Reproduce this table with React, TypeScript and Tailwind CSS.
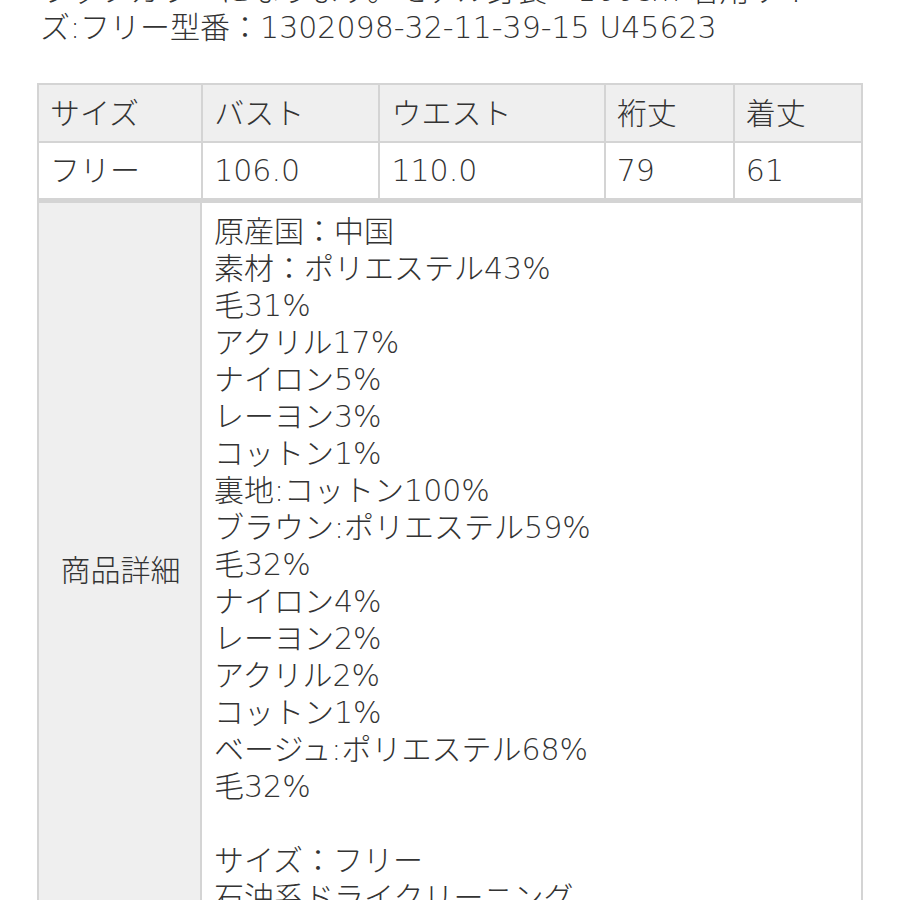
const header = ['サイズ', 'バスト', 'ウエスト', '裄丈', '着丈']
const values = ['フリー', '106.0', '110.0', '79', '61']
const widths = ['w-[164px]', 'w-[177px]', 'w-[225px]', 'w-[129px]', 'w-[128px]']

const details = [
  '原産国：中国',
  '素材：ポリエステル43%',
  '毛31%',
  'アクリル17%',
  'ナイロン5%',
  'レーヨン3%',
  'コットン1%',
  '裏地:コットン100%',
  'ブラウン:ポリエステル59%',
  '毛32%',
  'ナイロン4%',
  'レーヨン2%',
  'アクリル2%',
  'コットン1%',
  'ベージュ:ポリエステル68%',
  '毛32%',
  '',
  'サイズ：フリー',
  '石油系ドライクリーニング',
]

export default function App() {
  return (
    <div className="h-[900px] overflow-hidden bg-white text-[#333] font-[family-name:'DejaVu_Sans','Noto_Sans_CJK_JP',sans-serif] font-light text-[30px] leading-[37px]">
      <div className="-mt-[28px] px-[40px]">
        <p>ラップカラーになります。モデル身長：166cm 着用サイ</p>
        <p>ズ:フリー型番：1302098-32-11-39-15 U45623</p>
      </div>

      <div className="mt-[37px] ml-[37px] w-[826px]">
        <table className="table-fixed border-collapse w-full">
          <tbody>
            <tr className="bg-[#efefef] h-[58px]">
              {header.map((h, i) => (
                <td key={h} className={`${widths[i]} border-2 border-[#d4d4d4] px-[11px] pb-[0px] align-middle`}>{h}</td>
              ))}
            </tr>
            <tr className="h-[57px]">
              {values.map((v, i) => (
                <td key={i} className={`${widths[i]} border-2 border-[#d4d4d4] px-[11px] pb-[0px] align-middle`}>{v}</td>
              ))}
            </tr>
          </tbody>
        </table>

        <div className="flex border-2 border-[#d4d4d4] border-t-[3px]">
          <div className="w-[163px] shrink-0 bg-[#efefef] border-r-2 border-[#d4d4d4] flex items-center justify-center pl-[2px] pt-[1px]">
            商品詳細
          </div>
          <div className="flex-1 pl-[12px] pt-[10px] pb-[20px]">
            {details.map((d, i) => (
              <div key={i} className="h-[37px] whitespace-nowrap">{d}</div>
            ))}
          </div>
        </div>
      </div>
    </div>
  )
}
